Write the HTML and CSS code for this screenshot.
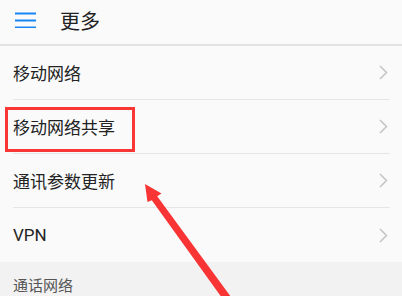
FILE: index.html
```html
<!DOCTYPE html>
<html lang="zh-CN">
<head>
<meta charset="utf-8">
<link rel="stylesheet" href="styles.css">
</head>
<body>
<div class="page">
  <header class="header">
    <svg class="menu-icon" width="21" height="16" viewBox="0 0 21 16">
      <rect x="0" y="0.5" width="21" height="2" fill="#1786f5"/>
      <rect x="0" y="7.5" width="21" height="2" fill="#1786f5"/>
      <rect x="0" y="14.5" width="21" height="2" fill="#1786f5"/>
    </svg>
    <span class="title">更多</span>
  </header>
  <ul class="list">
    <li class="row"><span class="label">移动网络</span><svg class="chev" width="9" height="15" viewBox="0 0 9 15"><path d="M1 1 L7.5 7.5 L1 14" fill="none" stroke="#c6c6c6" stroke-width="1.6"/></svg></li>
    <li class="row"><span class="label">移动网络共享</span><svg class="chev" width="9" height="15" viewBox="0 0 9 15"><path d="M1 1 L7.5 7.5 L1 14" fill="none" stroke="#c6c6c6" stroke-width="1.6"/></svg></li>
    <li class="row"><span class="label">通讯参数更新</span><svg class="chev" width="9" height="15" viewBox="0 0 9 15"><path d="M1 1 L7.5 7.5 L1 14" fill="none" stroke="#c6c6c6" stroke-width="1.6"/></svg></li>
    <li class="row last"><span class="label latin">VPN</span><svg class="chev" width="9" height="15" viewBox="0 0 9 15"><path d="M1 1 L7.5 7.5 L1 14" fill="none" stroke="#c6c6c6" stroke-width="1.6"/></svg></li>
  </ul>
  <div class="section">通话网络</div>
  <div class="highlight"></div>
  <svg class="arrow" width="402" height="296" viewBox="0 0 402 296">
    <polygon points="145,184 161.5,193.5 157.2,196.3 242,312 235,316 151.8,200.3 147.5,202" fill="#f83434"/>
  </svg>
</div>
</body>
</html>
```

FILE: styles.css
```css
html, body {
  margin: 0;
  padding: 0;
}
body {
  background: #fafafa;
  font-family: "Noto Sans CJK SC", "Noto Sans", sans-serif;
  color: #222;
  width: 402px;
  height: 296px;
  overflow: hidden;
}
.page {
  position: relative;
  width: 402px;
  height: 296px;
  overflow: hidden;
}
.header {
  height: 44px;
  display: flex;
  align-items: center;
  padding-left: 15px;
  border-bottom: 2.5px solid #e3e3e3;
  box-sizing: content-box;
}
.menu-icon {
  display: block;
  margin-top: -4px;
}
.title {
  margin-left: 24px;
  font-size: 20px;
  line-height: 20px;
  margin-top: -3px;
  color: #222;
}
.list {
  list-style: none;
  margin: 0;
  padding: 0;
}
.row {
  height: 54px;
  margin: 0 12px 0 13px;
  display: flex;
  align-items: center;
  justify-content: space-between;
  border-bottom: 1px solid #e6e6e6;
  box-sizing: border-box;
}
.row.last {
  border-bottom: none;
}
.label {
  font-size: 17px;
  line-height: 20px;
  color: #222;
}
.latin {
  font-family: "Roboto", "Noto Sans", sans-serif;
  font-size: 17px;
}
.chev {
  display: block;
  margin-right: 2px;
}
.section {
  background: #f2f2f2;
  height: 40px;
  padding: 13px 0 0 13px;
  box-sizing: border-box;
  font-size: 15px;
  line-height: 20px;
  color: #555;
}
.highlight {
  position: absolute;
  left: 5px;
  top: 107px;
  width: 130px;
  height: 45px;
  border: 3px solid #f93636;
  box-sizing: border-box;
}
.arrow {
  position: absolute;
  left: 0;
  top: 0;
}
```
